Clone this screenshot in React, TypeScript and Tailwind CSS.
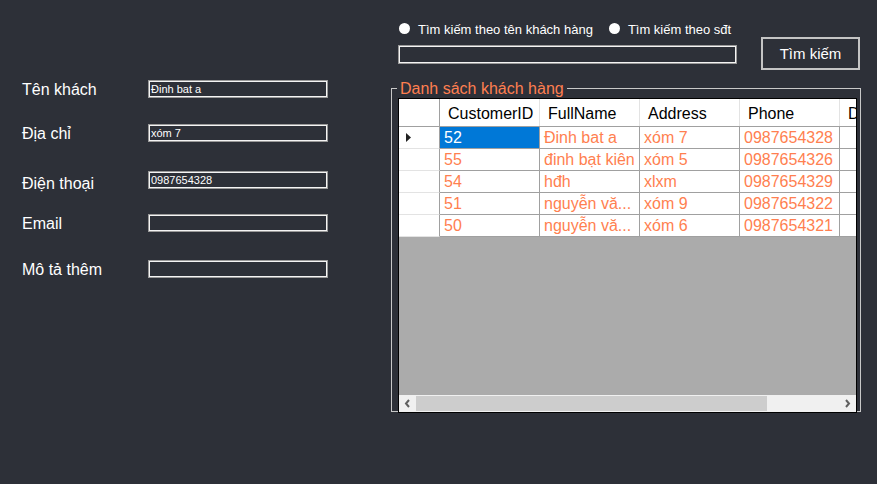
import React from "react";

// WinForms-style customer lookup screen: form on the left, search + grid on the right.

const font = { fontFamily: '"Liberation Sans", Arial, sans-serif' };

const rows = [
  { id: "52", name: "Đinh bat a", addr: "xóm 7", phone: "0987654328" },
  { id: "55", name: "đinh bạt kiên", addr: "xóm 5", phone: "0987654326" },
  { id: "54", name: "hđh", addr: "xlxm", phone: "0987654329" },
  { id: "51", name: "nguyễn vă...", addr: "xóm 9", phone: "0987654322" },
  { id: "50", name: "nguyễn vă...", addr: "xóm 6", phone: "0987654321" },
];

function Field({ label, value, mt, labelShift = "translate-y-[1px]" }: { label: string; value?: string; mt: string; labelShift?: string }) {
  return (
    <div className={`flex items-center h-[18px] ${mt}`}>
      <div className={`w-[126px] text-[16px] leading-none text-white ${labelShift}`}>{label}</div>
      <div className="w-[180px] h-[18px] border border-[#9a9a9a] shadow-[inset_0_0_0_1px_#f4f4f4] flex items-center px-[2px] text-[11px] leading-none text-white overflow-hidden whitespace-nowrap">
        {value}
      </div>
    </div>
  );
}

function Radio({ label }: { label: string }) {
  return (
    <div className="flex items-center gap-[8px]">
      <span className="w-[11px] h-[11px] rounded-full bg-white" />
      <span className="text-[13px] leading-none text-white translate-y-[1px]">{label}</span>
    </div>
  );
}

export default function App() {
  return (
    <div style={font} className="w-[877px] h-[484px] bg-[#2d3038] flex overflow-hidden">
      {/* left form */}
      <div className="w-[391px] pl-[22px] pt-[80px] flex flex-col">
        <Field label="Tên khách" value="Đinh bat a" mt="" />
        <Field label="Địa chỉ" value="xóm 7" mt="mt-[26px]" />
        <Field label="Điện thoại" value="0987654328" mt="mt-[29px]" labelShift="translate-y-[4px]" />
        <Field label="Email" mt="mt-[25px]" />
        <Field label="Mô tả thêm" mt="mt-[28px]" />
      </div>

      {/* right side */}
      <div className="w-[470px] flex flex-col">
        <div className="h-[16px] mt-[20px] ml-[8px] flex items-center gap-[16px]">
          <Radio label="Tìm kiếm theo tên khách hàng" />
          <Radio label="Tìm kiếm theo sđt" />
        </div>
        <div className="mt-[1px] flex items-start">
          <div className="ml-[7px] mt-[8px] w-[339px] h-[19px] border border-[#9a9a9a] shadow-[inset_0_0_0_1px_#f4f4f4]" />
          <button className="ml-[24px] w-[99px] h-[33px] border-2 border-[#c4c4c4] text-white text-[15px] leading-none">
            Tìm kiếm
          </button>
        </div>

        {/* group box */}
        <div className="relative mt-[18px] h-[324px] border border-[#c8c8c8] pl-[6px] pt-[9px]">
          <span className="absolute left-[5px] top-[-9px] px-[3px] bg-[#2d3038] text-[16px] leading-[18px] text-[#ff7f50]">
            Danh sách khách hàng
          </span>
          <div className="w-[459px] h-[315px] border border-black bg-[#ababab] flex flex-col overflow-hidden">
            {/* header */}
            <div className="flex h-[28px] shrink-0 bg-white border-b border-[#a0a0a0] text-[16px] text-black">
              <div className="w-[41px] shrink-0 border-r border-[#a0a0a0]" />
              {["CustomerID", "FullName", "Address", "Phone", "D"].map((h, i) => (
                <div
                  key={h}
                  className={`shrink-0 pl-[8px] pt-[2px] flex items-center ${i < 4 ? "w-[100px] border-r border-[#e3e3e3]" : "w-[40px]"}`}
                >
                  {h}
                </div>
              ))}
            </div>
            {/* body */}
            {rows.map((r, ri) => (
              <div key={r.id} className="flex h-[22px] shrink-0 bg-white text-[16px] text-[#ff7f50] whitespace-nowrap">
                <div className="w-[41px] shrink-0 border-r border-[#a0a0a0] border-b border-b-[#e3e3e3] flex items-center pl-[7px]">
                  {ri === 0 && (
                    <svg width="5" height="9" viewBox="0 0 5 9">
                      <path d="M0 0 L5 4.5 L0 9 Z" fill="#222" />
                    </svg>
                  )}
                </div>
                {[r.id, r.name, r.addr, r.phone].map((v, ci) => (
                  <div
                    key={ci}
                    className={`w-[100px] shrink-0 border-r border-b border-[#a0a0a0] flex items-center pl-[4px] pt-[1px] overflow-hidden ${
                      ri === 0 && ci === 0 ? "bg-[#0078d7] text-white" : ""
                    }`}
                  >
                    {v}
                  </div>
                ))}
                <div className="w-[40px] shrink-0 border-b border-[#a0a0a0]" />
              </div>
            ))}
            <div className="flex-1" />
            {/* horizontal scrollbar */}
            <div className="h-[17px] shrink-0 bg-[#f0f0f0] flex items-center">
              <div className="w-[17px] flex justify-center">
                <svg width="7" height="9" viewBox="0 0 7 9">
                  <path d="M5 1 L2 4.5 L5 8" stroke="#606060" strokeWidth="2" fill="none" />
                </svg>
              </div>
              <div className="w-[351px] h-[15px] bg-[#cdcdcd]" />
              <div className="flex-1" />
              <div className="w-[17px] flex justify-center">
                <svg width="7" height="9" viewBox="0 0 7 9">
                  <path d="M2 1 L5 4.5 L2 8" stroke="#606060" strokeWidth="2" fill="none" />
                </svg>
              </div>
            </div>
          </div>
        </div>
      </div>
    </div>
  );
}
